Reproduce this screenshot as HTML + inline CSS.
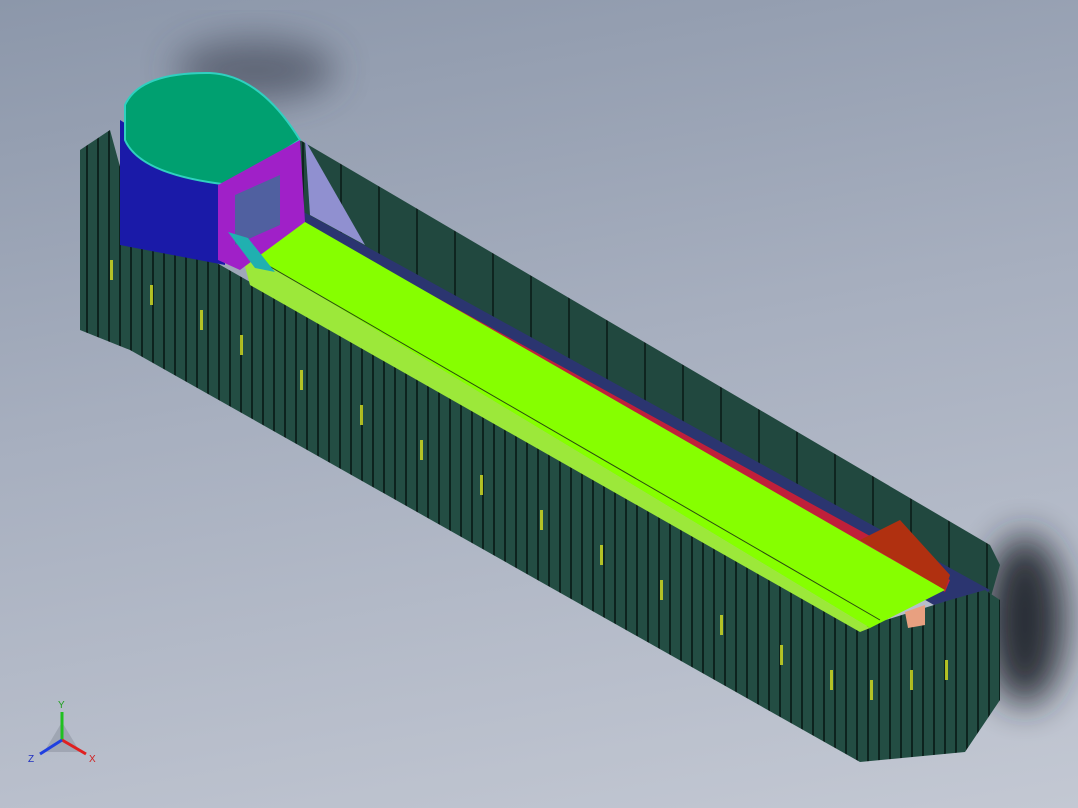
<!DOCTYPE html>
<html><head><meta charset="utf-8"><style>
html,body{margin:0;padding:0;width:1078px;height:808px;overflow:hidden;background:linear-gradient(170deg,#8c97aa 0%,#a7afbf 45%,#c3c8d3 100%);font-family:"Liberation Sans",sans-serif}
svg{position:absolute;left:0;top:0}
</style></head><body>
<svg width="1078" height="808" viewBox="0 0 1078 808">
<defs>
<filter id="b" x="-50%" y="-50%" width="200%" height="200%"><feGaussianBlur stdDeviation="18"/></filter>
<pattern id="st" width="11" height="808" patternUnits="userSpaceOnUse">
<rect width="11" height="808" fill="#234d43"/><rect x="9" width="2" height="808" fill="#0d231e"/>
</pattern>
<pattern id="st2" width="38" height="808" patternUnits="userSpaceOnUse">
<rect width="38" height="808" fill="#21483f"/><rect x="36" width="2" height="808" fill="#0f2520"/>
</pattern>
</defs>
<ellipse cx="1025" cy="620" rx="40" ry="85" fill="#23272f" filter="url(#b)" opacity=".95"/>
<ellipse cx="255" cy="70" rx="80" ry="30" fill="#3a4050" filter="url(#b)" opacity=".6"/>
<polygon points="300,140 990,545 1000,565 990,600 300,215" fill="url(#st2)"/>
<polygon points="300,210 990,590 960,620 300,240" fill="#2b3570"/>
<polygon points="310,228 950,580 945,592 305,240" fill="#c0203a"/>
<polygon points="80,150 110,130 125,185 215,262 860,628 950,600 985,590 1000,600 1000,700 965,752 860,762 130,350 80,330" fill="url(#st)"/>
<g fill="#d8e020" opacity=".8">
<rect x="150" y="285" width="3" height="20"/><rect x="200" y="310" width="3" height="20"/><rect x="240" y="335" width="3" height="20"/>
<rect x="300" y="370" width="3" height="20"/><rect x="360" y="405" width="3" height="20"/><rect x="420" y="440" width="3" height="20"/>
<rect x="480" y="475" width="3" height="20"/><rect x="540" y="510" width="3" height="20"/><rect x="600" y="545" width="3" height="20"/>
<rect x="660" y="580" width="3" height="20"/><rect x="720" y="615" width="3" height="20"/><rect x="780" y="645" width="3" height="20"/>
<rect x="830" y="670" width="3" height="20"/><rect x="870" y="680" width="3" height="20"/><rect x="910" y="670" width="3" height="20"/><rect x="945" y="660" width="3" height="20"/>
<rect x="110" y="260" width="3" height="20"/>
</g>
<polygon points="240,248 305,222 945,590 870,628" fill="#86ff00"/>
<polygon points="240,248 870,628 860,632 250,285" fill="#9ce83a"/>
<line x1="250" y1="255" x2="880" y2="620" stroke="#2a4a10" stroke-width="1"/>
<polygon points="860,540 900,520 950,575 945,590" fill="#b03010"/>
<polygon points="905,612 925,605 925,625 908,628" fill="#e8a080"/>
<path d="M120,120 L120,245 L225,265 L225,185 Z" fill="#1a1aa8"/>
<path d="M125,105 Q140,72 210,73 Q260,75 300,140 L230,185 Q140,175 125,140 Z" fill="#00a070" stroke="#30d0c0" stroke-width="2"/>
<polygon points="218,185 300,140 305,222 240,270 218,260" fill="#a020c8"/>
<polygon points="235,195 280,175 280,225 235,245" fill="#5060a0"/>
<polygon points="305,140 310,215 365,245" fill="#9090d0"/>
<polygon points="228,232 248,238 275,272 255,268" fill="#20b0b0"/>
<polygon points="62,722 44,752 80,752" fill="#9aa0ac" opacity=".8"/>
<line x1="62" y1="740" x2="62" y2="712" stroke="#20c020" stroke-width="3"/>
<line x1="62" y1="740" x2="86" y2="754" stroke="#e02020" stroke-width="3"/>
<line x1="62" y1="740" x2="40" y2="754" stroke="#2040e0" stroke-width="3"/>
<text x="58" y="708" font-size="10" fill="#20a020">Y</text>
<text x="89" y="762" font-size="10" fill="#d02020">X</text>
<text x="28" y="762" font-size="10" fill="#2030c0">Z</text>
</svg>
</body></html>
